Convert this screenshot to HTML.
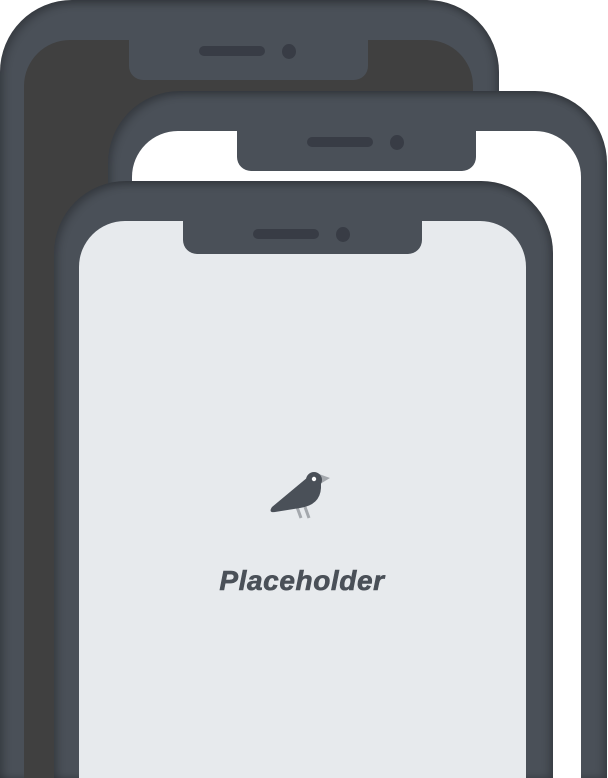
<!DOCTYPE html>
<html><head><style>
html,body{margin:0;padding:0;width:608px;height:778px;overflow:hidden;background:#fff;position:relative;font-family:"Liberation Sans",sans-serif}
.ph{position:absolute;width:499px;bottom:0;background:#4a5058;border-radius:72px 72px 0 0;box-shadow:inset 4px 4px 8px rgba(0,0,0,.22),inset -4px 0 8px rgba(0,0,0,.22)}
.scr{position:absolute;left:24px;top:40px;right:26px;bottom:0;border-radius:46px 46px 0 0}
.notch{position:absolute;left:105px;width:239px;top:-2px;height:42px;background:#4a5058;border-radius:0 0 14px 14px}
.spk{position:absolute;left:70px;top:8px;width:66px;height:10px;border-radius:5px;background:#383c45}
.cam{position:absolute;left:153px;top:6px;width:14px;height:15px;border-radius:50%;background:#383c45}
</style></head><body>
<div class="ph" style="left:0;top:0"><div class="scr" style="background:#404040"><div class="notch"><div class="spk"></div><div class="cam"></div></div></div></div>
<div class="ph" style="left:108px;top:91px"><div class="scr" style="background:#fff"><div class="notch"><div class="spk"></div><div class="cam"></div></div></div></div>
<div class="ph" style="left:54px;top:181px"><div class="scr" style="left:25px;right:27px;background:#e7eaed"><div class="notch" style="left:104px;height:35px"><div class="spk" style="top:10px"></div><div class="cam" style="top:8px"></div></div></div></div>
<svg style="position:absolute;left:0;top:0" width="608" height="778">
<path d="M297,507 L301,518 M305,507 L309,518" stroke="#a4a8ad" stroke-width="3"/>
<path d="M319,474 L330,478 L320,484 Z" fill="#a4a8ad"/>
<path d="M308,477 L272,507 Q268,513 275,512 L300,508 Q320,505 321,488 L321,480 Z" fill="#4a5058"/>
<circle cx="314" cy="480" r="8" fill="#4a5058"/>
<circle cx="314" cy="479" r="2.2" fill="#fff"/>
</svg>
<div style="position:absolute;left:0;width:604px;top:565px;text-align:center;font-size:28px;font-weight:bold;font-style:italic;color:#4a5058;letter-spacing:0.6px;-webkit-text-stroke:0.6px #4a5058">Placeholder</div>
</body></html>
